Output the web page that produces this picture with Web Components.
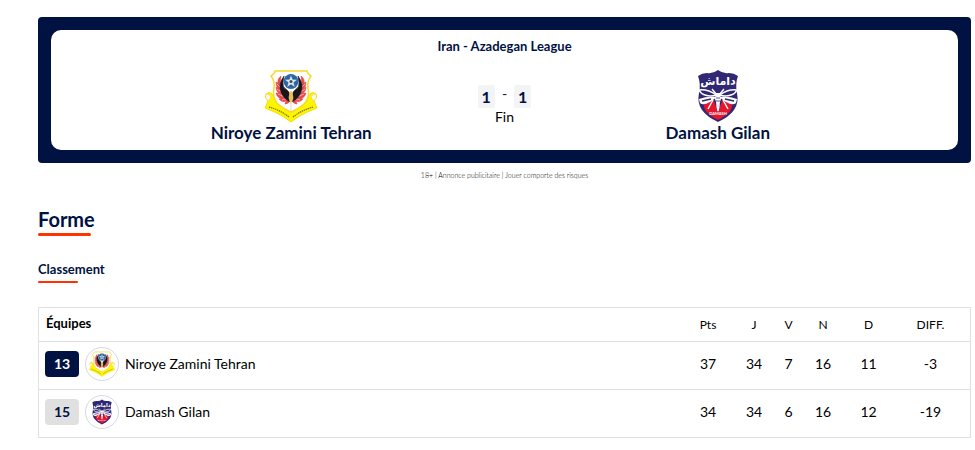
<!DOCTYPE html>
<html lang="fr">
<head>
    <meta charset="utf-8">
    <meta name="viewport" content="width=device-width, initial-scale=1">
    <title>Niroye Zamini Tehran - Damash Gilan</title>
    <style>
        body {
            margin: 0;
            padding: 17px 4px 12px 38px;
            background: #ffffff;
            color: #000000;
            font: 14px/20px Lato, "Open Sans", sans-serif;
        }
    </style>
</head>
<body>
    <match-page></match-page>

    <script>
        const crests = {
            niroye: /*html*/`
                <svg viewBox="0 0 54 54" aria-hidden="true">
                    <path d="M2 25 Q5 22 8 25 L12 32 Q16 38 27 42 Q38 38 42 32 L46 25 Q49 22 52 25 Q54 28 50 32 L53 39 Q42 43 34 48 L27 53 L20 48 Q12 43 1 39 L4 32 Q0 28 2 25Z" fill="#fff500" stroke="#f4df0a"/>
                    <path d="M2 25 Q5 24 7 28 L5 32 Q0 30 2 25Z M52 25 Q49 24 47 28 L49 32 Q54 30 52 25Z" fill="#fffbe0" stroke="#e5cf3c" stroke-width=".6"/>
                    <path d="M11 2 H43 Q43 4 47 7 Q43 12 44 19 Q46 27 41 34 Q36 39 27 43 Q18 39 13 34 Q8 27 10 19 Q11 12 7 7 Q11 4 11 2Z" fill="#ffffff" stroke="#f8d82a" stroke-width="1.5"/>
                    <path d="M17 7 Q13 10 14 14 L12 13 Q12 17 14 19 L12 18 Q12 22 15 24 L12 24 Q13 28 17 30 L15 30 Q18 34 22 32 L21 35 Q25 35 26 31 L20 23 Q15 15 17 7Z M37 7 Q41 10 40 14 L42 13 Q42 17 40 19 L42 18 Q42 22 39 24 L42 24 Q41 28 37 30 L39 30 Q36 34 32 32 L33 35 Q29 35 28 31 L34 23 Q39 15 37 7Z" fill="#e84a4d" stroke="#e84a4d" stroke-width=".6"/>
                    <path d="M13 15 L18 20 M13 20 L19 24 M14 25 L21 28 M18 31 L24 29 M41 15 L36 20 M41 20 L35 24 M40 25 L33 28 M36 31 L30 29" stroke="#ffffff" stroke-width=".5"/>
                    <path d="M20 7 Q14 15 17 23 Q19 29 26 33 Q28 25 23 21 Q18 18 19 13Z M34 7 Q40 15 37 23 Q35 29 28 33 Q26 25 31 21 Q36 18 35 13Z" fill="#17171b" stroke="#17171b" stroke-width=".6"/>
                    <circle cx="27" cy="12.5" r="7.5" fill="#2868ad"/>
                    <path d="M27 5.5 L28.7 10.3 L33.8 10.4 L29.8 13.5 L31.2 18.5 L27 15.5 L22.8 18.5 L24.2 13.5 L20.2 10.4 L25.3 10.3Z" fill="#e2e8ec" stroke="#254b78" stroke-width=".5"/>
                    <circle cx="27" cy="12.5" r="1.5" fill="#334a61"/>
                    <path d="M26 22 H28 L29 29 L27 36 L25 29Z" fill="#f5bb39" stroke="#fff0cc" stroke-width=".5"/>
                    <path d="M27 33 V42" stroke="#dddddf"/>
                    <path d="M5 38 Q16 41 25 48 M29 48 Q38 41 49 38" fill="none" stroke="#7b7b1b" stroke-width="1.3" stroke-dasharray="1.4 .7"/>
                </svg>
            `,
            damash: /*html*/`
                <svg viewBox="0 0 54 54" aria-hidden="true">
                    <path d="M27 1 Q32 5 38 4 Q43 4 47 7 Q44 15 46 24 Q48 34 43 41 Q38 48 27 53 Q16 48 11 41 Q6 34 8 24 Q10 15 7 7 Q11 4 16 4 Q22 5 27 1Z" fill="#302775"/>
                    <path d="M13 34 L22 29 L27 43 L32 29 L41 34 Q43 43 27 51 Q11 43 13 34Z" fill="#e3172e"/>
                    <text x="27" y="16" text-anchor="middle" direction="rtl" font-family="DejaVu Sans, sans-serif" font-size="11" font-weight="700" fill="#ffffff">داماش</text>
                    <path d="M8 21 Q17 20 25 26 Q20 28 14 26 Q10 25 8 21Z M46 21 Q37 20 29 26 Q34 28 40 26 Q44 25 46 21Z" fill="#302775" stroke="#ffffff" stroke-width="1.5"/>
                    <path d="M8 30 Q16 27 26 28 L19 33 Q12 37 9 34Z M46 30 Q38 27 28 28 L35 33 Q42 37 45 34Z" fill="#ffffff"/>
                    <path d="M11 32 L20 30 M43 32 L34 30" stroke="#302775" stroke-width="1.5"/>
                    <path d="M21 20 L26 26 V37 L27 42 L28 37 V26 L33 20 M22 31 L17 40 M32 31 L37 40" fill="none" stroke="#ffffff" stroke-width="1.4"/>
                    <path d="M25 24 H29 L30 30 L27 38 L24 30Z" fill="#ffffff"/>
                    <path d="M25 29 H29 M25 32 H29" stroke="#302775" stroke-width=".8"/>
                    <text x="27" y="46" text-anchor="middle" font-family="Lato, sans-serif" font-size="4" font-weight="700" fill="#ffffff">DAMASH</text>
                </svg>
            `
        };

        class TeamCrest extends HTMLElement {
            constructor() {
                super();
                this.attachShadow({ mode: "open" });
            }

            connectedCallback() {
                this.shadowRoot.innerHTML = /*html*/`
                    <style>
                        :host {
                            display: block;
                            width: var(--crest-size, 54px);
                            height: var(--crest-size, 54px);
                        }
                        svg {
                            display: block;
                            width: 100%;
                            height: 100%;
                        }
                    </style>
                    ${crests[this.getAttribute("team")]}
                `;
            }
        }

        class MatchTeam extends HTMLElement {
            constructor() {
                super();
                const shadow = this.attachShadow({ mode: "open" });
                shadow.innerHTML = /*html*/`
                    <style>
                        :host {
                            display: flex;
                            flex-direction: column;
                            align-items: center;
                            color: #001242;
                            font-size: 17px;
                            font-weight: 700;
                            line-height: 20px;
                            white-space: nowrap;
                        }
                    </style>
                    <slot name="crest"></slot>
                    <slot></slot>
                `;
            }
        }

        class MatchScore extends HTMLElement {
            constructor() {
                super();
                this.attachShadow({ mode: "open" });
            }

            connectedCallback() {
                this.shadowRoot.innerHTML = /*html*/`
                    <style>
                        :host {
                            display: flex;
                            flex-direction: column;
                            align-items: center;
                            padding-top: 16px;
                            line-height: 18px;
                        }
                        .goals {
                            display: flex;
                            gap: 7px;
                            color: #001242;
                        }
                        b {
                            padding: 0 4px;
                            border-radius: 2px;
                            background: #f3f4f6;
                            font-size: 16px;
                            line-height: 23px;
                        }
                    </style>
                    <div class="goals">
                        <b>${this.getAttribute("home")}</b>
                        <span>-</span>
                        <b>${this.getAttribute("away")}</b>
                    </div>
                    <slot></slot>
                `;
            }
        }

        class MatchBanner extends HTMLElement {
            constructor() {
                super();
                const shadow = this.attachShadow({ mode: "open" });
                shadow.innerHTML = /*html*/`
                    <style>
                        :host {
                            display: block;
                            padding: 13px;
                            border-radius: 4px;
                            background: #001242;
                        }
                        section {
                            padding: 6px 16px 7px;
                            border-radius: 10px;
                            background: #ffffff;
                        }
                        h1 {
                            margin: 0 0 13px;
                            color: #001242;
                            font-size: 13px;
                            line-height: 20px;
                            text-align: center;
                        }
                        .teams {
                            display: grid;
                            grid-template-columns: repeat(3, 1fr);
                            max-width: 640px;
                            margin: 0 auto;
                        }
                    </style>
                    <section>
                        <h1><slot name="league"></slot></h1>
                        <div class="teams"><slot></slot></div>
                    </section>
                `;
            }
        }

        class SectionTitle extends HTMLElement {
            constructor() {
                super();
                this.attachShadow({ mode: "open" });
            }

            connectedCallback() {
                const tag = this.hasAttribute("small") ? "h3" : "h2";
                this.shadowRoot.innerHTML = /*html*/`
                    <style>
                        :host {
                            display: block;
                        }
                        h2, h3 {
                            margin: 0;
                            color: #001242;
                            font-size: 20px;
                            line-height: 27px;
                        }
                        h3 {
                            font-size: 13px;
                            line-height: 18px;
                        }
                        h2:after, h3:after {
                            content: "";
                            display: block;
                            width: 53px;
                            height: 3px;
                            border-radius: 2px;
                            background: #ff3300;
                        }
                        h3:after {
                            width: 40px;
                            height: 2px;
                            margin-top: 3px;
                        }
                    </style>
                    <${tag}><slot></slot></${tag}>
                `;
            }
        }

        class LeagueTable extends HTMLElement {
            teams = [
                { rank: 13, crest: "niroye", name: "Niroye Zamini Tehran", stats: [37, 34, 7, 16, 11, -3] },
                { rank: 15, crest: "damash", name: "Damash Gilan", stats: [34, 34, 6, 16, 12, -19] }
            ];

            css = /*css*/`
                :host {
                    display: block;
                }
                table {
                    width: 100%;
                    border-collapse: collapse;
                    border: 1px solid #e0e0e0;
                    table-layout: fixed;
                }
                tr {
                    border-bottom: 1px solid #e0e0e0;
                }
                th, td {
                    height: 44px;
                    padding: 0 0 3px;
                    font-weight: 400;
                    text-align: center;
                }
                thead th {
                    height: 33px;
                    padding: 0;
                    font-size: 12px;
                }
                thead th:first-child {
                    height: 30px;
                    padding: 0 0 3px 7px;
                    font-size: 13px;
                    font-weight: 700;
                    text-align: left;
                }
                .stat {
                    width: 46px;
                }
                .losses {
                    width: 45px;
                }
                .narrow {
                    width: 23px;
                }
                .wide {
                    width: 79px;
                }
                .team {
                    display: flex;
                    align-items: center;
                    gap: 6px;
                    padding-left: 6px;
                }
                .rank {
                    width: 34px;
                    border-radius: 4px;
                    background: #e0e0e0;
                    color: #001242;
                    font-weight: 700;
                    line-height: 26px;
                }
                tr:first-child .rank {
                    background: #001242;
                    color: #ffffff;
                }
                .badge {
                    --crest-size: 26px;
                    padding: 3px;
                    border: 1px solid #d5d8e5;
                    border-radius: 50%;
                }
            `;

            constructor() {
                super();
                const shadow = this.attachShadow({ mode: "open" });
                shadow.innerHTML = /*html*/`
                    <style>${this.css}</style>
                    <table>
                        <thead>
                            <tr>
                                <th scope="col">Équipes</th>
                                <th scope="col" class="stat">Pts</th>
                                <th scope="col" class="stat">J</th>
                                <th scope="col" class="narrow">V</th>
                                <th scope="col" class="stat">N</th>
                                <th scope="col" class="losses">D</th>
                                <th scope="col" class="wide">DIFF.</th>
                            </tr>
                        </thead>
                        <tbody>${this.teams.map(this.row).join("")}</tbody>
                    </table>
                `;
            }

            row(team) {
                return /*html*/`
                    <tr>
                        <th scope="row">
                            <div class="team">
                                <span class="rank">${team.rank}</span>
                                <team-crest class="badge" team="${team.crest}"></team-crest>
                                <span>${team.name}</span>
                            </div>
                        </th>
                        ${team.stats.map((stat) => `<td>${stat}</td>`).join("")}
                    </tr>
                `;
            }
        }

        class MatchPage extends HTMLElement {
            constructor() {
                super();
                const shadow = this.attachShadow({ mode: "open" });
                shadow.innerHTML = /*html*/`
                    <style>
                        :host {
                            display: block;
                        }
                        .notice {
                            margin: 7px 0 26px;
                            font-size: 7px;
                            font-weight: 300;
                            line-height: 10px;
                            text-align: center;
                        }
                        section-title {
                            margin-bottom: 24px;
                        }
                    </style>
                    <match-banner>
                        <span slot="league">Iran - Azadegan League</span>
                        <match-team><team-crest slot="crest" team="niroye"></team-crest>Niroye Zamini Tehran</match-team>
                        <match-score home="1" away="1">Fin</match-score>
                        <match-team><team-crest slot="crest" team="damash"></team-crest>Damash Gilan</match-team>
                    </match-banner>
                    <p class="notice">18+ | Annonce publicitaire | Jouer comporte des risques</p>
                    <section-title>Forme</section-title>
                    <section-title small>Classement</section-title>
                    <league-table></league-table>
                `;
            }
        }

        customElements.define("team-crest", TeamCrest);
        customElements.define("match-team", MatchTeam);
        customElements.define("match-score", MatchScore);
        customElements.define("match-banner", MatchBanner);
        customElements.define("section-title", SectionTitle);
        customElements.define("league-table", LeagueTable);
        customElements.define("match-page", MatchPage);
    </script>
</body>
</html>
